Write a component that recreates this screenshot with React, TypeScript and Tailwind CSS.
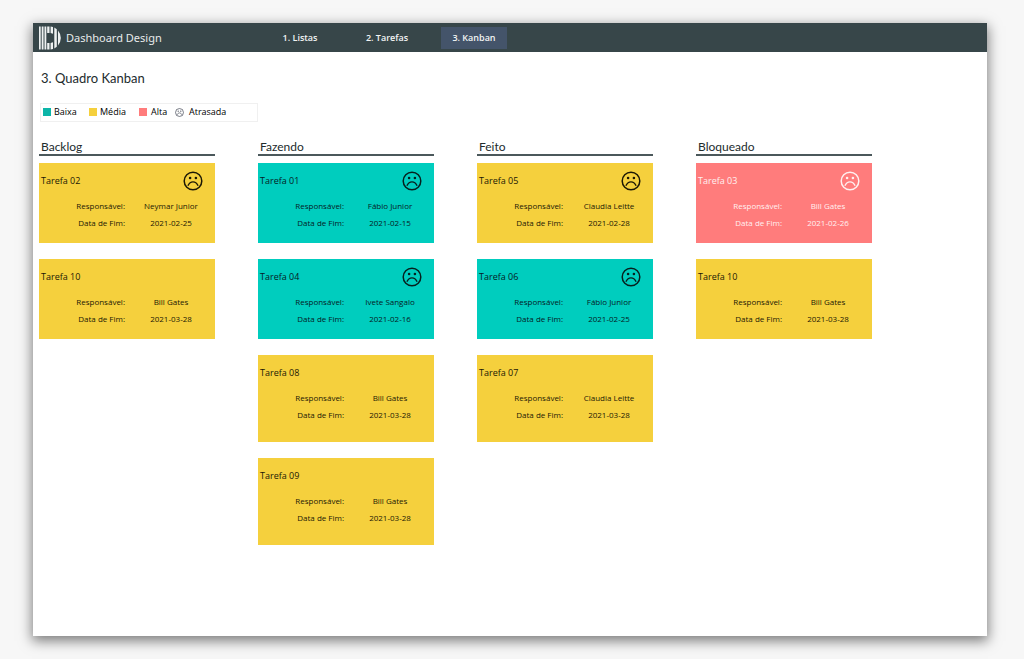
type Priority = "baixa" | "media" | "alta";

interface Task {
  title: string;
  owner: string;
  due: string;
  priority: Priority;
  late?: boolean;
}

interface Column {
  name: string;
  tasks: Task[];
}

const columns: Column[] = [
  {
    name: "Backlog",
    tasks: [
      { title: "Tarefa 02", owner: "Neymar Junior", due: "2021-02-25", priority: "media", late: true },
      { title: "Tarefa 10", owner: "Bill Gates", due: "2021-03-28", priority: "media" },
    ],
  },
  {
    name: "Fazendo",
    tasks: [
      { title: "Tarefa 01", owner: "Fábio Junior", due: "2021-02-15", priority: "baixa", late: true },
      { title: "Tarefa 04", owner: "Ivete Sangalo", due: "2021-02-16", priority: "baixa", late: true },
      { title: "Tarefa 08", owner: "Bill Gates", due: "2021-03-28", priority: "media" },
      { title: "Tarefa 09", owner: "Bill Gates", due: "2021-03-28", priority: "media" },
    ],
  },
  {
    name: "Feito",
    tasks: [
      { title: "Tarefa 05", owner: "Claudia Leitte", due: "2021-02-28", priority: "media", late: true },
      { title: "Tarefa 06", owner: "Fábio Junior", due: "2021-02-25", priority: "baixa", late: true },
      { title: "Tarefa 07", owner: "Claudia Leitte", due: "2021-03-28", priority: "media" },
    ],
  },
  {
    name: "Bloqueado",
    tasks: [
      { title: "Tarefa 03", owner: "Bill Gates", due: "2021-02-26", priority: "alta", late: true },
      { title: "Tarefa 10", owner: "Bill Gates", due: "2021-03-28", priority: "media" },
    ],
  },
];

const cardColors: Record<Priority, string> = {
  baixa: "bg-[#00cdbe] text-[#06201e]",
  media: "bg-[#f5d03d] text-[#1c1805]",
  alta: "bg-[#ff7c7c] text-[#fff0f0]",
};

function SadFace({ className }: { className: string }) {
  return (
    <svg viewBox="0 0 20 20" className={className} fill="none" stroke="currentColor" aria-hidden="true">
      <circle cx="10" cy="10" r="8.8" strokeWidth="1.5" />
      <path d="M5.2 14.3C6.2 12 8 10.900 10 10.900s3.800 1.100 4.800 3.400" strokeWidth="1.4" strokeLinecap="round" />
      <circle cx="7.100" cy="7" r="1.300" fill="currentColor" stroke="none" />
      <circle cx="12.900" cy="7" r="1.300" fill="currentColor" stroke="none" />
    </svg>
  );
}

function Logo() {
  return (
    <svg viewBox="0 0 22 24" className="h-6 w-[22px] text-[#eef1f1]" fill="currentColor" aria-hidden="true">
      <rect x="0" y="0.500" width="1.700" height="23" />
      <rect x="2.700" y="0.500" width="1.800" height="23" />
      <rect x="5.500" y="0.500" width="1.800" height="23" />
      <path d="M8.200 0.500h2.300v6.500h-2.300zM8.200 17h2.300v6.500h-2.300z" />
      <path d="M11.600 0.500l2.400 0.400v6.900l-2.400-0.800zM11.600 17l2.400-0.800v6.900l-2.400 0.400z" />
      <path d="M15.300 1.500l2.500 1.700v17.600l-2.500 1.700z" />
      <path d="M19 4.500q2.800 3.300 2.800 7.500t-2.800 7.500z" />
    </svg>
  );
}

function TaskCard({ task, tall }: { task: Task; tall: boolean }) {
  return (
    <article className={`font-['Open_Sans',sans-serif] ${cardColors[task.priority]} ${tall ? "min-h-[87px]" : "min-h-20"}`}>
      <div className="flex h-[34px] items-center justify-between pt-px pr-3 pl-[2px]">
        <h3 className="text-[9px] leading-3">{task.title}</h3>
        {task.late && <SadFace className="size-5" />}
      </div>
      <dl className="grid grid-cols-2 text-[8px] leading-[17px]">
        <dt className="pr-[2px] text-right">Responsável:</dt>
        <dd className="text-center">{task.owner}</dd>
        <dt className="pr-[2px] text-right">Data de Fim:</dt>
        <dd className="text-center">{task.due}</dd>
      </dl>
    </article>
  );
}

export default function App() {
  return (
    <div className="flex min-h-screen flex-col bg-[#f7f7f7] pt-[23px] pr-[37px] pb-[23px] pl-[33px] font-['Lato',sans-serif] text-[#222b2d]">
      <div className="flex grow flex-col bg-white shadow-[0_4px_12px_1px_rgba(0,0,0,0.5)]">
        <header className="flex h-[29px] items-center bg-[#374649] pl-[6px]">
          <div className="flex w-[228px] items-center gap-[5px] text-[#e8ebeb]">
            <Logo />
            <span className="font-['Noto_Sans',sans-serif] text-[11px] leading-4">Dashboard Design</span>
          </div>
          <nav className="flex gap-[21px] text-center font-['Open_Sans',sans-serif] text-[9px] leading-[22px] font-semibold text-[#f2f4f4]">
            <a href="#listas" className="w-[66px]">1. Listas</a>
            <a href="#tarefas" className="w-[66px]">2. Tarefas</a>
            <a href="#kanban" aria-current="page" className="w-[66px] bg-[#44546a]">3. Kanban</a>
          </nav>
        </header>

        <main className="flex flex-col pr-[6px] pb-8 pl-[6px]">
          <h1 className="mt-4 pl-[2px] text-[13px] leading-5">3. Quadro Kanban</h1>

          <ul className="mt-[15px] ml-px flex h-[19px] w-[218px] items-center border border-[#f0f0f0] pb-px pl-[2px] font-['Open_Sans',sans-serif] text-[9px] leading-3 font-medium text-black">
            <li className="flex w-[46px] items-center gap-[3px]">
              <span className="size-2 bg-[#0cb5a8]" />
              Baixa
            </li>
            <li className="flex w-[50px] items-center gap-[3px]">
              <span className="size-2 bg-[#f5d03d]" />
              Média
            </li>
            <li className="flex w-9 items-center gap-1">
              <span className="size-2 bg-[#ff7c7c]" />
              Alta
            </li>
            <li className="flex items-center gap-[5px]">
              <SadFace className="size-[9px] text-[#3a3f4d]" />
              Atrasada
            </li>
          </ul>

          <div className="mt-4 grid max-w-[833px] grid-cols-4 gap-x-[43px]">
            {columns.map((column) => (
              <section key={column.name} className="flex flex-col">
                <h2 className="border-b-2 border-[#4b585b] pt-[2px] pl-[2px] text-[12px] leading-[14px]">{column.name}</h2>
                <div className="mt-[7px] flex flex-col gap-4">
                  {column.tasks.map((task, index) => (
                    <TaskCard key={task.title} task={task} tall={index > 1} />
                  ))}
                </div>
              </section>
            ))}
          </div>
        </main>
      </div>
    </div>
  );
}
